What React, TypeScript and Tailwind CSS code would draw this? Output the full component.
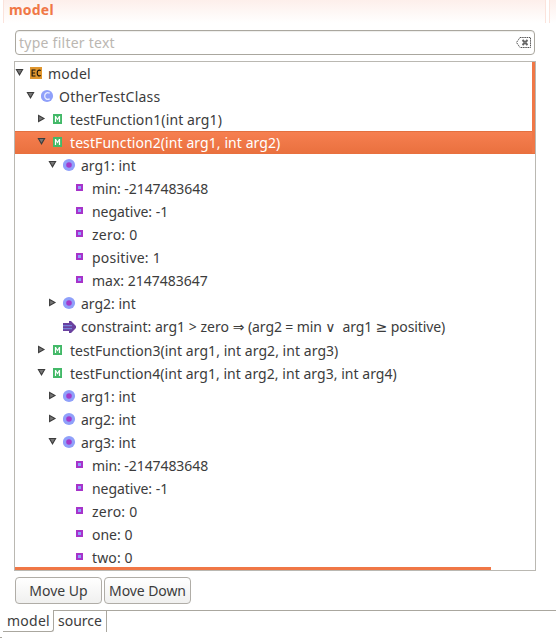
import React from "react";

type Kind = "ec" | "class" | "method" | "param" | "choice" | "constraint";
type Row = { text: string; kind: Kind; pad: string; track: string; arrow?: "open" | "closed"; selected?: boolean };

const L0 = "pl-0";
const L1 = "pl-[11px]";
const L2 = "pl-[22px]";
const L3 = "pl-[33px]";
const L4 = "pl-[44px]";

const rows: Row[] = [
  { text: "model", kind: "ec", pad: L0, track: "tracking-[0.25px]", arrow: "open" },
  { text: "OtherTestClass", kind: "class", pad: L1, track: "tracking-[0.2px]", arrow: "open" },
  { text: "testFunction1(int arg1)", kind: "method", pad: L2, track: "tracking-[0.12px]", arrow: "closed" },
  { text: "testFunction2(int arg1, int arg2)", kind: "method", pad: L2, track: "tracking-[0.08px]", arrow: "open", selected: true },
  { text: "arg1: int", kind: "param", pad: L3, track: "", arrow: "open" },
  { text: "min: -2147483648", kind: "choice", pad: L4, track: "tracking-[-0.08px]" },
  { text: "negative: -1", kind: "choice", pad: L4, track: "tracking-[-0.04px]" },
  { text: "zero: 0", kind: "choice", pad: L4, track: "tracking-[0.22px]" },
  { text: "positive: 1", kind: "choice", pad: L4, track: "tracking-[0.22px]" },
  { text: "max: 2147483647", kind: "choice", pad: L4, track: "" },
  { text: "arg2: int", kind: "param", pad: L3, track: "", arrow: "closed" },
  { text: "constraint: arg1 > zero ⇒ (arg2 = min ∨  arg1 ≥ positive)", kind: "constraint", pad: L3, track: "" },
  { text: "testFunction3(int arg1, int arg2, int arg3)", kind: "method", pad: L2, track: "tracking-[0.05px]", arrow: "closed" },
  { text: "testFunction4(int arg1, int arg2, int arg3, int arg4)", kind: "method", pad: L2, track: "tracking-[0.04px]", arrow: "open" },
  { text: "arg1: int", kind: "param", pad: L3, track: "", arrow: "closed" },
  { text: "arg2: int", kind: "param", pad: L3, track: "", arrow: "closed" },
  { text: "arg3: int", kind: "param", pad: L3, track: "", arrow: "open" },
  { text: "min: -2147483648", kind: "choice", pad: L4, track: "tracking-[-0.08px]" },
  { text: "negative: -1", kind: "choice", pad: L4, track: "tracking-[-0.04px]" },
  { text: "zero: 0", kind: "choice", pad: L4, track: "tracking-[0.22px]" },
  { text: "one: 0", kind: "choice", pad: L4, track: "" },
  { text: "two: 0", kind: "choice", pad: L4, track: "tracking-[0.12px]" },
];

function Arrow({ dir }: { dir?: "open" | "closed" }) {
  return (
    <svg className="h-[23px] w-[15px] shrink-0" viewBox="0 0 15 23">
      {dir === "open" && <path d="M1.4 7.5h6.2L4.5 12.8z" fill="#777" stroke="#3c3c3c" strokeWidth="1.1" />}
      {dir === "closed" && <path d="M1.6 7.4v6.2L7 10.5z" fill="#777" stroke="#3c3c3c" strokeWidth="1.1" />}
    </svg>
  );
}

function Icon({ kind }: { kind: Kind }) {
  return (
    <svg className="h-[23px] w-[18px] shrink-0" viewBox="0 0 18 23">
      {kind === "ec" && (
        <g>
          <rect y="5" width="12" height="12" fill="#e0962e" />
          <path d="M5.5 8H2.1v6h3.4M2.1 11h3M10.8 8.5C8.4 7.5 7.2 8.8 7.2 11s1.2 3.5 3.6 2.5" fill="none" stroke="#17120a" strokeWidth="1.1" />
        </g>
      )}
      {kind === "class" && (
        <g>
          <circle cx="6" cy="11" r="6.1" fill="#8fa0fa" />
          <path d="M8.7 8.2C5.8 6.8 3.7 8.4 3.7 11s2.1 4.2 5 2.8" fill="none" stroke="#e8ecff" strokeWidth="1.3" />
        </g>
      )}
      {kind === "method" && (
        <g>
          <rect x="1" y="6" width="9" height="10" fill="#43b968" />
          <path d="M3.5 14V8M7.5 14V8" fill="none" stroke="#fff" strokeWidth="1.2" />
          <path d="M3.4 8.2l2.1 3.3 2.1-3.3" fill="none" stroke="#fff" strokeWidth="1.2" />
        </g>
      )}
      {kind === "param" && (
        <g>
          <circle cx="6" cy="11" r="6.1" fill="#8fa0fa" />
          <circle cx="6" cy="11" r="2.8" fill="#a33bcb" />
        </g>
      )}
      {kind === "choice" && (
        <g>
          <rect x="2" y="7" width="7" height="7" fill="#a733ca" />
          <rect x="4" y="9" width="3" height="3" fill="#8ea0fa" />
        </g>
      )}
      {kind === "constraint" && (
        <g>
          <path d="M0 8h6V6h2l5 5v2l-5 5H6v-2H0z" fill="#6a419f" />
          <path d="M0 10h9v1.2H0zM0 13h9v1.2H0z" fill="#7582d8" />
        </g>
      )}
    </svg>
  );
}

const buttonClass =
  "h-[27px] w-[87px] rounded-[4px] border border-[#b0ada7] bg-gradient-to-b from-white to-[#f0f0ef] whitespace-nowrap";

export default function App() {
  return (
    <div className="flex h-[638px] w-[556px] flex-col overflow-hidden bg-white font-['Noto_Sans','DejaVu_Sans',sans-serif] text-[14px] text-[#3c3c3c]">
      <header className="flex h-[23px] shrink-0 items-stretch gap-[3px] pl-[3px]">
        <div className="w-[543px] border-r border-l border-[#fbe3dc] bg-gradient-to-b from-[#fdefeb] to-white pl-[5px]">
          <h1 className="text-[14px] leading-[19px] font-bold tracking-[0.2px] text-[#f07746]">model</h1>
        </div>
        <div className="flex-1 border-l border-[#fbe3dc] bg-gradient-to-b from-[#fdefeb] to-white" />
      </header>
      <div className="mt-[7px] ml-[15px] flex h-[25px] w-[520px] shrink-0 items-center justify-between rounded-[4px] border border-[#aaa79f] px-[3px] text-[#bbb7b2] shadow-[inset_0_1px_1px_#eeeeec]">
        <span className="tracking-[0.25px]">type filter text</span>
        <svg className="h-[11px] w-[15px]" viewBox="0 0 15 11">
          <path d="M4 .5h10.5v10H4L.5 5.5z" fill="none" stroke="#555" strokeDasharray="1.5 .7" />
          <path d="M6.5 3l5 5m0-5l-5 5" stroke="#444" strokeWidth="1.8" />
          <path d="M6.5 3l5 5m0-5l-5 5" stroke="#ccc" strokeWidth=".5" />
        </svg>
      </div>
      <main className="relative mt-[6px] ml-[14px] h-[510px] w-[522px] shrink-0 overflow-hidden border border-[#bab8b2]">
        {rows.map((r, i) => (
          <div
            key={i}
            className={`flex items-start ${r.kind === "constraint" ? "h-[24px]" : "h-[23px]"} ${r.selected ? "border-t border-[#e3703f] bg-gradient-to-b from-[#f67f50] to-[#e9703e] text-white *:-mt-px" : ""} ${r.pad}`}
          >
            <Arrow dir={r.arrow} />
            <Icon kind={r.kind} />
            {r.kind === "constraint" ? (
              <span className="flex leading-[23px] whitespace-pre">
                <span className="tracking-[0.02px]">constraint: arg1 &gt; zero </span>
                <span>⇒ </span>
                <span className="tracking-[-0.11px]">(arg2 = min ∨  arg1 ≥ positive)</span>
              </span>
            ) : (
              <span className={`leading-[23px] whitespace-pre ${r.track}`}>{r.text}</span>
            )}
          </div>
        ))}
        <div className="absolute top-0 right-0 h-[91px] w-[3px] bg-[#f07746]" />
        <div className="absolute bottom-0 left-0 h-[3px] w-[476px] bg-[#f07746]" />
      </main>
      <div className="mt-[6px] ml-[15px] flex shrink-0 gap-[2px]">
        <button className={buttonClass}>Move Up</button>
        <button className={`${buttonClass} tracking-[-0.08px]`}>Move Down</button>
      </div>
      <nav className="mt-[6px] flex h-[22px] shrink-0 pl-[3px] leading-[21px]">
        <div className="w-[51px] rounded-br-[3px] border-r border-b border-[#aaa79f] pl-[4px] tracking-[0.25px]">model</div>
        <div className="w-[53px] border-t border-r border-[#aaa79f] pl-[4px] leading-[19px]">source</div>
        <div className="flex-1 border-t border-[#aaa79f]" />
      </nav>
      <div className="mt-[5px] h-px w-[2px] bg-[#aaa79f]" />
    </div>
  );
}
